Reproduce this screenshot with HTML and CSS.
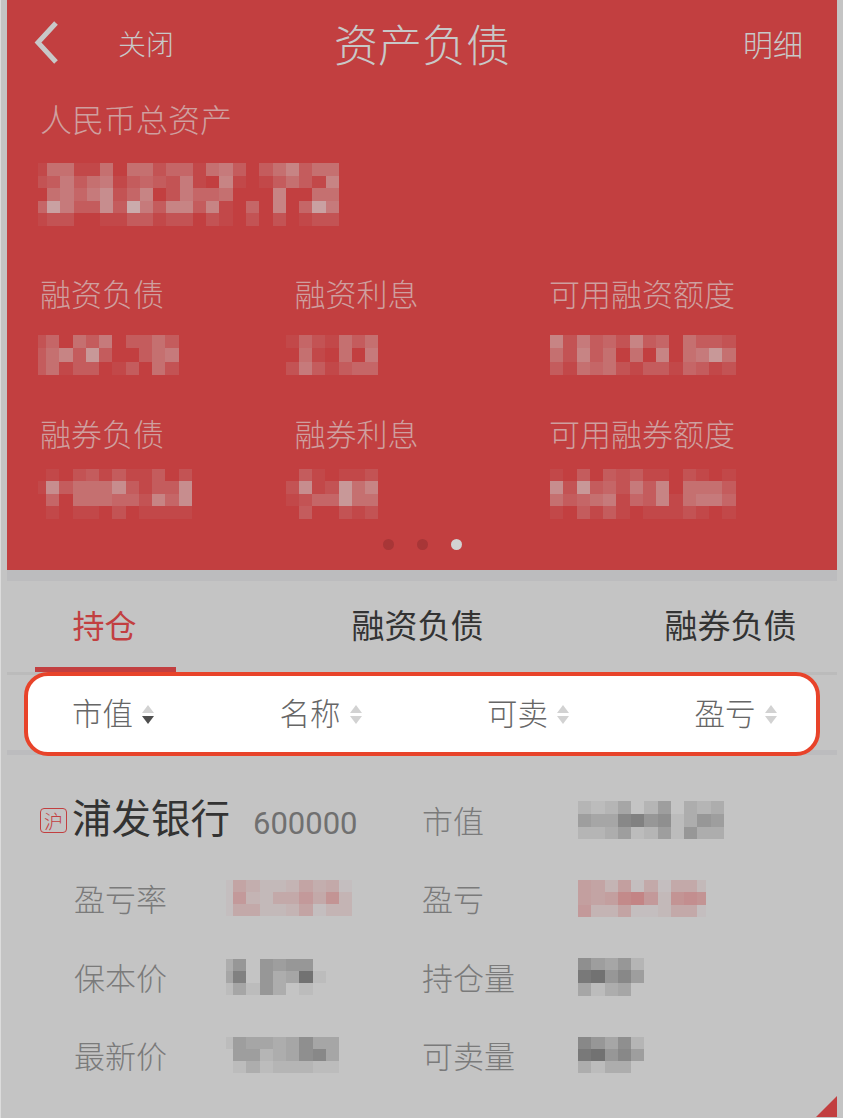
FILE: index.html
```html
<!DOCTYPE html>
<html lang="zh-CN">
<head>
<meta charset="utf-8">
<title>资产负债</title>
<link rel="stylesheet" href="styles.css">
</head>
<body>
<div class="page">
  <section class="hero">
    <header class="topbar">
      <div class="topbar-left">
        <svg class="back" width="30" height="46" viewBox="0 0 30 46"><path d="M23 3 L5 22.500 L23 42" fill="none" stroke="#c8c8c8" stroke-width="5"/></svg>
        <span class="close">关闭</span>
      </div>
      <h1 class="title">资产负债</h1>
      <span class="detail">明细</span>
    </header>
    <div class="total-label">人民币总资产</div>
    <div class="mosaic tone-light total-value" data-first="9" data-h="12.6"
      data-rows="15511505524415630357355 23635613432610710135317 05646824702644500070055 4a63383b6377371040704a6 12200113312202102020122"></div>
    <div class="metrics">
      <div class="metric">
        <div class="metric-label">融资负债</div>
        <div class="mosaic tone-light metric-value" data-first="8" data-h="13.33" data-rows="24053603353 35739300356 35133013052"></div>
      </div>
      <div class="metric">
        <div class="metric-label">融资利息</div>
        <div class="mosaic tone-light metric-value metric-value-b" data-first="13.3" data-h="13.33" data-rows="1421535 0510506 2631344"></div>
      </div>
      <div class="metric">
        <div class="metric-label">可用融资额度</div>
        <div class="mosaic tone-light metric-value metric-value-c" data-first="13.3" data-h="13.33" data-rows="72634273405332 52735050705695 31545213314312"></div>
      </div>
      <div class="metric metric-low">
        <div class="metric-label">融券负债</div>
        <div class="mosaic tone-light metric-value" data-first="8" data-h="12.5" data-rows="0102313113020 1835558313380 0405554427480 0101102011110"></div>
      </div>
      <div class="metric metric-low">
        <div class="metric-label">融券利息</div>
        <div class="mosaic tone-light metric-value metric-value-b" data-first="13.3" data-h="12.5" data-rows="0310112 2812957 1244955 0300212"></div>
      </div>
      <div class="metric metric-low">
        <div class="metric-label">可用融券额度</div>
        <div class="mosaic tone-light metric-value metric-value-c" data-first="13.3" data-h="12.5" data-rows="10303231102101 82934263705553 53456143715664 10313101112101"></div>
      </div>
    </div>
    <div class="dots"><i class="dot"></i><i class="dot"></i><i class="dot dot-on"></i></div>
  </section>
  <div class="strip"></div>
  <nav class="tabs">
    <span class="tab tab-on">持仓</span>
    <span class="tab">融资负债</span>
    <span class="tab">融券负债</span>
  </nav>
  <div class="sortrow">
    <div class="sortbox">
      <div class="sort"><span class="sort-text">市值</span><span class="arrows"><i class="up"></i><i class="down down-on"></i></span></div>
      <div class="sort"><span class="sort-text">名称</span><span class="arrows"><i class="up"></i><i class="down"></i></span></div>
      <div class="sort"><span class="sort-text">可卖</span><span class="arrows"><i class="up"></i><i class="down"></i></span></div>
      <div class="sort"><span class="sort-text">盈亏</span><span class="arrows"><i class="up"></i><i class="down"></i></span></div>
    </div>
  </div>
  <section class="position">
    <div class="stock">
      <span class="badge">沪</span>
      <span class="stock-name">浦发银行</span>
      <span class="stock-code">600000</span>
    </div>
    <span class="field">市值</span>
    <div class="mosaic tone-dark val" data-first="13.3" data-h="12.7" data-rows="21240250323 54489671365 22351251633"></div>

    <span class="field">盈亏率</span>
    <div class="mosaic tone-pink val" data-first="7" data-h="12" data-rows="1642236451 1832558593 1552236133"></div>
    <span class="field">盈亏</span>
    <div class="mosaic tone-pink val val-trim" data-first="13.3" data-h="12.300" data-rows="7637151552 767bc829a9 8336112551"></div>

    <span class="field">保本价</span>
    <div class="mosaic tone-dark val" data-first="7" data-h="12" data-rows="36065660 490634b1 14163010"></div>
    <span class="field">持仓量</span>
    <div class="mosaic tone-dark val" data-first="13.3" data-h="12.7" data-rows="75462 ab685 41340"></div>

    <span class="field">最新价</span>
    <div class="mosaic tone-dark val" data-first="7" data-h="12" data-rows="154434744 055234784 013122211"></div>
    <span class="field">可卖量</span>
    <div class="mosaic tone-dark val" data-first="13.3" data-h="12.2" data-rows="86472 ab685 31330"></div>
  </section>
  <svg class="corner" width="22" height="21" viewBox="0 0 22 21"><path d="M0 21 L21 0 V21 Z" fill="#c23f40"/></svg>
</div>
<script src="mosaic.js"></script>
</body>
</html>
```
FILE: styles.css
```css
* { box-sizing: border-box; }
html, body { margin: 0; padding: 0; }
body {
  width: 843px;
  height: 1118px;
  overflow: hidden;
  background: #c4c4c4;
  font-family: "Noto Sans CJK SC", "Noto Sans", sans-serif;
  font-weight: 300;
}
.page {
  position: relative;
  width: 843px;
  height: 1118px;
  padding: 0 6px 0 6px;
  background: #c4c4c4;
  border-left: 1px solid #dcdcdc;
  overflow: hidden;
}

/* hero */
.hero {
  height: 570px;
  background: #c23f40;
  padding-left: 33px;
  display: flex;
  flex-direction: column;
}
.topbar {
  height: 98px;
  margin-left: -33px;
  padding-bottom: 12px;
  display: grid;
  grid-template-columns: 1fr auto 1fr;
  align-items: center;
}
.topbar-left { display: flex; align-items: center; padding-left: 26px; }
.back { display: block; margin-top: 0; }
.close { margin-left: 55px; font-size: 28px; line-height: 40px; color: #c8c8c8; }
.title { margin: 0; font-size: 44px; line-height: 60px; font-weight: 300; color: #c8c8c8; }
.detail { justify-self: end; padding-right: 34px; font-size: 30px; line-height: 40px; color: #c8c8c8; }
.total-label { margin-top: 0; font-size: 32px; line-height: 40px; color: #cf9f9f; }
.total-value { margin: 25px 0 0 -2px; }
.metrics {
  margin-top: 47px;
  display: grid;
  grid-template-columns: repeat(3, 254.500px);
}
.metric-label { font-size: 31px; line-height: 40px; color: #cf9f9f; }
.metric-value { margin: 22px 0 0 -2px; }
.metric-value-b { margin-left: -9px; }
.metric-value-c { margin-left: 1px; }
.metric-low { margin-top: 38px; }
.metric-low .metric-value { margin-top: 16px; }
.dots {
  margin: 20.500px 0 0 -33px;
  display: flex;
  justify-content: center;
  gap: 23px;
}
.dot { width: 11px; height: 11px; border-radius: 50%; background: #a83637; }
.dot-on { background: #d2d2d2; }

/* mosaic placeholder for masked values */
.mosaic { display: grid; justify-content: start; }
.tone-light .px { background: #cccccc; }
.tone-pink .px { background: #c23f40; }
.tone-dark .px { background: #3c3c3c; }

/* tabs */
.strip { height: 11px; background: #bcbcbe; }
.tabs {
  height: 91px;
  padding-left: 28px;
  display: flex;
  gap: 172px;
}
.tab {
  width: 141px;
  padding: 18px 2px 0 0;
  text-align: center;
  font-size: 33px;
  line-height: 50px;
  font-weight: 400;
  color: #333;
  white-space: nowrap;
}
.tab-on { border-bottom: 5px solid #c23f40; color: #c23f40; font-size: 32px; }

/* sort row with highlight */
.sortrow {
  height: 84px;
  padding: 0 17px;
  background:
    linear-gradient(#bbbbbb, #bbbbbb) 0 0 / 100% 3px no-repeat,
    linear-gradient(#bcbcbe, #bcbcbe) 0 78px / 100% 5px no-repeat;
}
.sortbox {
  height: 84px;
  padding-left: 44px;
  display: grid;
  grid-template-columns: repeat(4, 207.500px);
  align-items: center;
  background: #fff;
  border: 4.500px solid #e8432a;
  border-radius: 24px;
}
.sort {
  display: flex;
  align-items: center;
  gap: 9px;
  font-size: 30.500px;
  line-height: 40px;
  color: #666;
}
.sort-text { margin-bottom: 4px; }
.arrows { display: flex; flex-direction: column; gap: 3px; }
.up, .down { display: block; width: 0; height: 0; border-left: 6.500px solid transparent; border-right: 6.500px solid transparent; }
.up { border-bottom: 8px solid #d2d2d2; }
.down { border-top: 8px solid #d2d2d2; }
.down-on { border-top-color: #4e4e4e; }

/* position card */
.position {
  padding: 25px 0 0 67px;
  display: grid;
  grid-template-columns: 152px 196px 156px 1fr;
  grid-auto-rows: 78.330px;
  align-items: center;
}
.stock {
  grid-column: span 2;
  margin-left: -34px;
  display: flex;
  align-items: center;
}
.badge {
  width: 27px;
  height: 25px;
  margin-right: 5px;
  border: 1px solid #c23f40;
  border-radius: 4px;
  font-size: 19px;
  line-height: 23px;
  text-align: center;
  color: #c23f40;
}
.stock-name { margin-bottom: 8px; font-size: 39.500px; line-height: 50px; font-weight: 400; color: #333; }
.stock-code { margin: 6px 0 0 23px; font-family: Roboto, "Noto Sans", sans-serif; font-size: 31px; font-weight: 400; color: #707070; }
.field { font-size: 31px; line-height: 40px; color: #7a7a7a; }
.val-trim { width: 128px; overflow: hidden; }

/* corner mark */
.corner { position: absolute; right: 5px; bottom: 1px; display: block; }
```
FILE: mosaic.js
```js
document.querySelectorAll('.mosaic').forEach(function (box) {
  var rows = box.dataset.rows.split(' ');
  var first = box.dataset.first, h = box.dataset.h;
  var cols = Math.max.apply(null, rows.map(function (r) { return r.length; }));
  var step = box.classList.contains('tone-light') ? 0.07 : box.classList.contains('tone-pink') ? 0.04 : 0.055;
  box.style.gridTemplateColumns = first + 'px repeat(' + (cols - 1) + ', 13.27px)';
  box.style.gridAutoRows = h + 'px';
  rows.forEach(function (r) {
    for (var i = 0; i < cols; i++) {
      var c = document.createElement('div');
      c.className = 'px';
      c.style.opacity = (parseInt(r[i] || '0', 36) * step).toFixed(3);
      box.appendChild(c);
    }
  });
});
```
